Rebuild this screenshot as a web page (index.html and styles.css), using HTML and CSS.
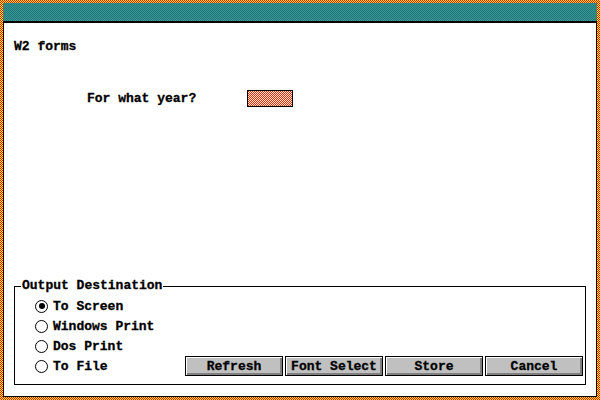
FILE: index.html
```html
<!DOCTYPE html>
<html lang="en">
<head>
    <meta charset="UTF-8">
    <title>W2 forms</title>
    <link rel="stylesheet" href="styles.css">
</head>
<body>
    <div class="frame">
        <div class="window">
            <div class="titlebar"></div>

            <div class="content">
                <h1 class="heading">W2 forms</h1>

                <div class="yearRow">
                    <label class="yearLabel" for="year">For what year?</label>
                    <input type="text" id="year" class="yearInput">
                </div>

                <!-- Output options -->
                <fieldset class="group">
                    <legend>Output Destination</legend>
                    <div class="radioList">
                        <div class="radioRow"><span class="radio checked"></span>To Screen</div>
                        <div class="radioRow"><span class="radio"></span>Windows Print</div>
                        <div class="radioRow"><span class="radio"></span>Dos Print</div>
                        <div class="radioRow"><span class="radio"></span>To File</div>
                    </div>
                    <div class="buttons">
                        <button type="button">Refresh</button>
                        <button type="button">Font Select</button>
                        <button type="button">Store</button>
                        <button type="button">Cancel</button>
                    </div>
                </fieldset>
            </div>
        </div>
    </div>
</body>
</html>
```

FILE: styles.css
```css
body {
    margin: 0;
    padding: 0;
    font-family: "Liberation Mono", "DejaVu Sans Mono", monospace;
    font-size: 13px;
    font-weight: bold;
    color: #000;
    -webkit-text-stroke: 0.3px #000;
}

/* red / yellow dithered window border */
.frame {
    width: 600px;
    height: 400px;
    box-sizing: border-box;
    padding: 3px;
    background: url("data:image/svg+xml,%3Csvg xmlns='http://www.w3.org/2000/svg' width='2' height='2' shape-rendering='crispEdges'%3E%3Crect width='2' height='2' fill='%23ffff00'/%3E%3Crect width='1' height='1' fill='%23ff0000'/%3E%3Crect x='1' y='1' width='1' height='1' fill='%23ff0000'/%3E%3C/svg%3E") 0 0 / 2px 2px;
}

.window {
    height: 100%;
    box-sizing: border-box;
    display: flex;
    flex-direction: column;
    background-color: white;
    border: 1px solid #000;
    border-top: none;
}

.titlebar {
    height: 18px;
    margin: 0 -1px;
    flex-shrink: 0;
    border-bottom: 2px solid #000;
    background: url("data:image/svg+xml,%3Csvg xmlns='http://www.w3.org/2000/svg' width='2' height='2' shape-rendering='crispEdges'%3E%3Crect width='2' height='2' fill='%23508c8c'/%3E%3Crect width='1' height='1' fill='%23008080'/%3E%3Crect x='1' y='1' width='1' height='1' fill='%23008080'/%3E%3C/svg%3E") 0 0 / 2px 2px;
}

.content {
    flex: 1;
    display: flex;
    flex-direction: column;
}

.heading {
    margin: 16px 0 0 10px;
    font-size: 13px;
    line-height: 16px;
}

.yearRow {
    display: flex;
    align-items: center;
    margin: 35px 0 0 83px;
}

.yearLabel {
    width: 160px;
    line-height: 16px;
}

.yearInput {
    width: 46px;
    height: 17px;
    box-sizing: border-box;
    margin: 0;
    padding: 0;
    border: 1px solid #000;
    background: url("data:image/svg+xml,%3Csvg xmlns='http://www.w3.org/2000/svg' width='2' height='2' shape-rendering='crispEdges'%3E%3Crect width='2' height='2' fill='%23fff4d8'/%3E%3Crect width='1' height='1' fill='%23ff2000'/%3E%3Crect x='1' y='1' width='1' height='1' fill='%23ff2000'/%3E%3C/svg%3E") 0 0 / 2px 2px;
}

.group {
    margin: auto 10px 11px 10px;
    padding: 2px 2px 8px 20px;
    border: 1px solid #000;
    display: flex;
    align-items: flex-end;
}

.group legend {
    padding: 0 1px;
    margin-left: -14px;
    line-height: 16px;
}

.radioRow {
    display: flex;
    align-items: center;
    height: 20px;
}

.radio {
    width: 11px;
    height: 11px;
    margin-right: 5px;
    border: 1px solid #000;
    border-radius: 50%;
    background-color: white;
    display: flex;
    align-items: center;
    justify-content: center;
}

.radio.checked::after {
    content: "";
    width: 6px;
    height: 6px;
    border-radius: 50%;
    background-color: #000;
}

.buttons {
    display: flex;
    gap: 2px;
    margin-left: auto;
}

.buttons button {
    width: 98px;
    height: 20px;
    padding: 0;
    font-family: inherit;
    font-size: 13px;
    font-weight: bold;
    color: #000;
    background-color: #c0c0c0;
    border: 1px solid #000;
    box-shadow: inset 1px 1px 0 #fff, inset -2px -2px 0 #808080;
}
```
